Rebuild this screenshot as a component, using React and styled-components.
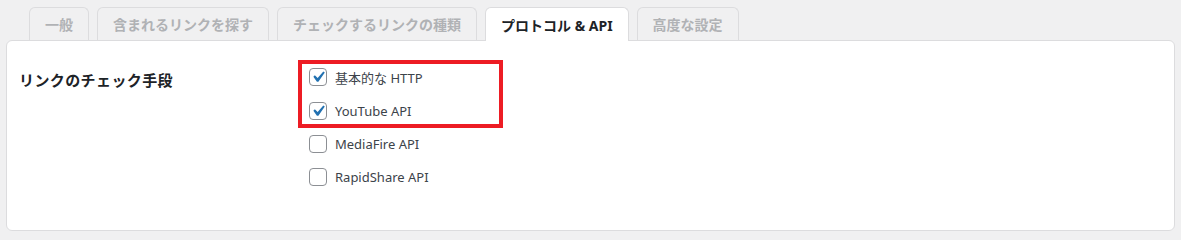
import React from "react";
import styled, { createGlobalStyle } from "styled-components";

const GlobalStyle = createGlobalStyle`
  body {
    margin: 0;
    background: #f0f0f1;
    font-family: "Noto Sans", "Noto Sans CJK JP", sans-serif;
    color: #3c434a;
  }
`;

const tabs = [
  "一般",
  "含まれるリンクを探す",
  "チェックするリンクの種類",
  "プロトコル & API",
  "高度な設定",
];

const options = [
  { label: "基本的な HTTP", checked: true },
  { label: "YouTube API", checked: true },
  { label: "MediaFire API", checked: false },
  { label: "RapidShare API", checked: false },
];

function CheckMark() {
  return (
    <svg width="22" height="22" viewBox="0 0 20 20">
      <path
        d="M14.83 4.89l1.34.94-5.81 8.38H9.02L5.78 9.67l1.34-1.25 2.57 2.4z"
        fill="#2271b1"
      />
    </svg>
  );
}

function Option({ label, checked }) {
  return (
    <OptionRow>
      <Box>{checked && <CheckMark />}</Box>
      <OptionText>{label}</OptionText>
    </OptionRow>
  );
}

function App() {
  const active = 3;
  return (
    <Page>
      <GlobalStyle />
      <TabBar>
        {tabs.map((t, i) => (
          <Tab key={t} $active={i === active}>
            {t}
          </Tab>
        ))}
      </TabBar>
      <Panel>
        <Label>リンクのチェック手段</Label>
        <OptionList>
          <Highlight>
            {options.slice(0, 2).map((o) => (
              <Option key={o.label} {...o} />
            ))}
          </Highlight>
          {options.slice(2).map((o) => (
            <Option key={o.label} {...o} />
          ))}
        </OptionList>
      </Panel>
    </Page>
  );
}

const Page = styled.div`
  padding: 7px 6px 0 6px;
`;

const TabBar = styled.div`
  display: flex;
  gap: 8px;
  padding-left: 23px;
  position: relative;
  z-index: 1;
`;

const Tab = styled.div`
  box-sizing: border-box;
  padding: 0 15px;
  display: flex;
  align-items: center;
  font-size: 14px;
  font-weight: 700;
  border: 1px solid #dcdcde;
  border-bottom: none;
  border-radius: 6px 6px 0 0;
  background: ${(p) => (p.$active ? "#fff" : "#f0f0f1")};
  color: ${(p) => (p.$active ? "#1d2327" : "#b0b2b5")};
  margin-bottom: ${(p) => (p.$active ? "-1px" : "0")};
  height: ${(p) => (p.$active ? "34px" : "33px")};
`;

const Panel = styled.div`
  background: #fff;
  border: 1px solid #dcdcde;
  border-radius: 6px;
  height: 191px;
  box-sizing: border-box;
  display: flex;
  padding: 19px 12px 0 12px;
`;

const Label = styled.div`
  width: 279px;
  margin-top: 7px;
  line-height: 26px;
  font-size: 15px;
  font-weight: 700;
  color: #1d2327;
  letter-spacing: 0.4px;
`;

const OptionList = styled.div`
  display: flex;
  flex-direction: column;
  gap: 7px;
`;

const Highlight = styled.div`
  width: 205px;
  box-sizing: border-box;
  border: 4px solid #ed1c24;
  display: flex;
  flex-direction: column;
  gap: 8px;
  padding-left: 7px;
  margin-bottom: -4px;
`;

const OptionRow = styled.label`
  display: flex;
  align-items: center;
  gap: 8px;
  height: 26px;
  font-size: 13px;

  ${OptionList} > & {
    padding-left: 11px;
  }
`;

const Box = styled.span`
  width: 18px;
  height: 18px;
  box-sizing: border-box;
  border: 1px solid #8c8f94;
  border-radius: 4px;
  background: #fff;
  display: flex;
  align-items: center;
  justify-content: center;
  overflow: visible;
  svg {
    flex: none;
  }
`;

const OptionText = styled.span`
  color: #3c434a;
`;

export default App;
